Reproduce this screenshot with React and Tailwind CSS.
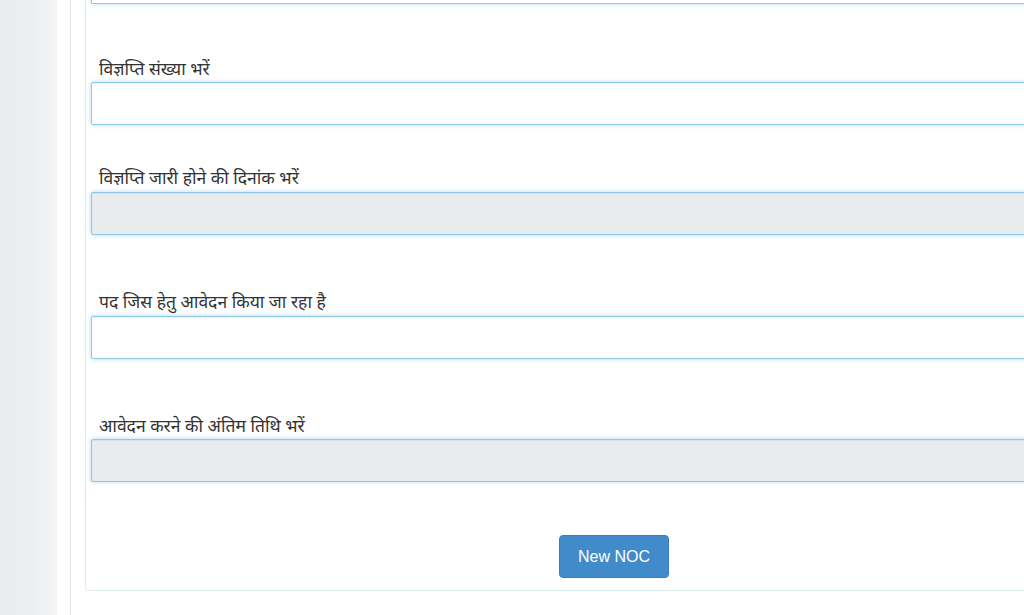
import React from "react";

const inputBase =
  "block w-full h-[43px] border border-[#8fc8e8] rounded-[2px] shadow-[inset_0_1px_1px_rgba(0,0,0,0.06),0_0_4px_rgba(102,175,233,0.5)]";

function Field({ label, gray, mt, mb = "mb-[4px]" }) {
  return (
    <div className={mt}>
      <div className={`h-[20px] leading-[20px] pl-[8px] text-[17.5px] text-[#333] ${mb}`}>{label}</div>
      <div className={`${inputBase} ${gray ? "bg-[#e9ecef]" : "bg-white"}`} />
    </div>
  );
}

export default function App() {
  return (
    <div
      className="flex h-[615px] w-[1024px] overflow-hidden bg-white"
      style={{ fontFamily: '"Noto Sans", "Liberation Sans", sans-serif' }}
    >
      <div className="w-[57px] shrink-0 bg-gradient-to-r from-[#e9ecef] via-[#eceef1] to-[#f3f4f6]" />
      <div className="w-[13px] shrink-0 bg-white" />
      <div className="w-[1px] shrink-0 bg-[#e2e2e2]" />
      <div className="shrink-0 pl-[14px]">
        <div className="w-[1058px] -mt-[40px] border border-[#dcecf1] rounded-[3px] px-[5px] pt-0 pb-[12px]">
          <div className={`${inputBase} bg-white`} />
          <Field label="विज्ञप्ति संख्या भरें" mt="mt-[54px]" />
          <Field label="विज्ञप्ति जारी होने की दिनांक भरें" gray mt="mt-[42px]" mb="mb-[5px]" />
          <Field label="पद जिस हेतु आवेदन किया जा रहा है" mt="mt-[56px]" mb="mb-[5px]" />
          <Field label="आवेदन करने की अंतिम तिथि भरें" gray mt="mt-[56px]" />
          <div className="mt-[53px] flex justify-center">
            <button
              className="h-[43px] w-[110px] rounded-[4px] bg-[#428bca] border border-[#3a7fbd] text-white text-[16px]"
              style={{ fontFamily: '"Liberation Sans", Arial, sans-serif' }}
            >
              New NOC
            </button>
          </div>
        </div>
      </div>
    </div>
  );
}
